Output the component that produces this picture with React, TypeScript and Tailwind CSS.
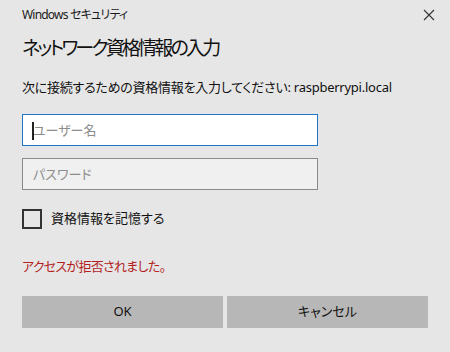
import React, { useState } from 'react';

const font = { fontFamily: '"Noto Sans", "Noto Sans CJK JP", sans-serif', fontFeatureSettings: '"palt"' };

const App: React.FC = () => {
  const [remember, setRemember] = useState<boolean>(false);

  return (
    <div className="w-[450px] h-[352px] bg-[#e6e6e6] text-black flex flex-col pl-[22px] pr-[22px] font-['Noto_Sans','Noto_Sans_CJK_JP',sans-serif] [font-feature-settings:'palt']">
      {/* title bar */}
      <div className="flex items-center justify-between h-[28px] pt-[1px]">
        <span className="text-[12px] leading-none text-[#1a1a1a] tracking-[-0.8px]">Windows セキュリティ</span>
        <svg width="12" height="12" viewBox="0 0 12 12" className="mr-[-7px]">
          <path d="M1 1 L11 11 M11 1 L1 11" stroke="#333" strokeWidth="1.1" />
        </svg>
      </div>

      <div className="mt-[6px] text-[19px] leading-[28px] text-[#111] tracking-[-2.8px]">ネットワーク資格情報の入力</div>

      <p className="mt-[16px] text-[13px] leading-[18px] text-[#111] tracking-[-0.25px]">
        次に接続するための資格情報を入力してください: raspberrypi.local
      </p>

      <div className="mt-[18px] relative w-[296px] h-[32px] border border-[#1f76c6] bg-white">
        <span className="absolute left-[9px] top-[7px] w-[2px] h-[18px] bg-[#222]" />
        <input
          type="text"
          placeholder="ユーザー名"
          className="w-full h-full px-[10px] text-[13px] bg-transparent outline-none placeholder:text-[#8c8c8c]"
          style={font}
        />
      </div>

      <div className="mt-[12px] w-[296px] h-[32px] border border-[#8a8a8a] bg-[#f0f0f0]">
        <input
          type="password"
          placeholder="パスワード"
          className="w-full h-full px-[10px] text-[13px] bg-transparent outline-none placeholder:text-[#8c8c8c]"
          style={font}
        />
      </div>

      <label className="mt-[19px] flex items-center gap-[9px] cursor-pointer">
        <span
          onClick={() => setRemember(!remember)}
          className="w-[20px] h-[20px] border-2 border-[#333] bg-transparent flex items-center justify-center"
        >
          {remember && (
            <svg width="14" height="14" viewBox="0 0 14 14">
              <path d="M2 7 L5.5 10.5 L12 3" stroke="#333" strokeWidth="1.6" fill="none" />
            </svg>
          )}
        </span>
        <span className="text-[13px] text-[#111]">資格情報を記憶する</span>
      </label>

      <p className="mt-[28px] text-[13px] leading-[18px] text-[#b31e1e] tracking-[-0.7px]">アクセスが拒否されました。</p>

      <div className="mt-[21px] flex gap-[4px]">
        <button className="w-[201px] h-[32px] bg-[#b7b7b7] text-[13px] text-[#111]">OK</button>
        <button className="w-[201px] h-[32px] bg-[#b7b7b7] text-[13px] text-[#111]">キャンセル</button>
      </div>
    </div>
  );
};

export default App;
